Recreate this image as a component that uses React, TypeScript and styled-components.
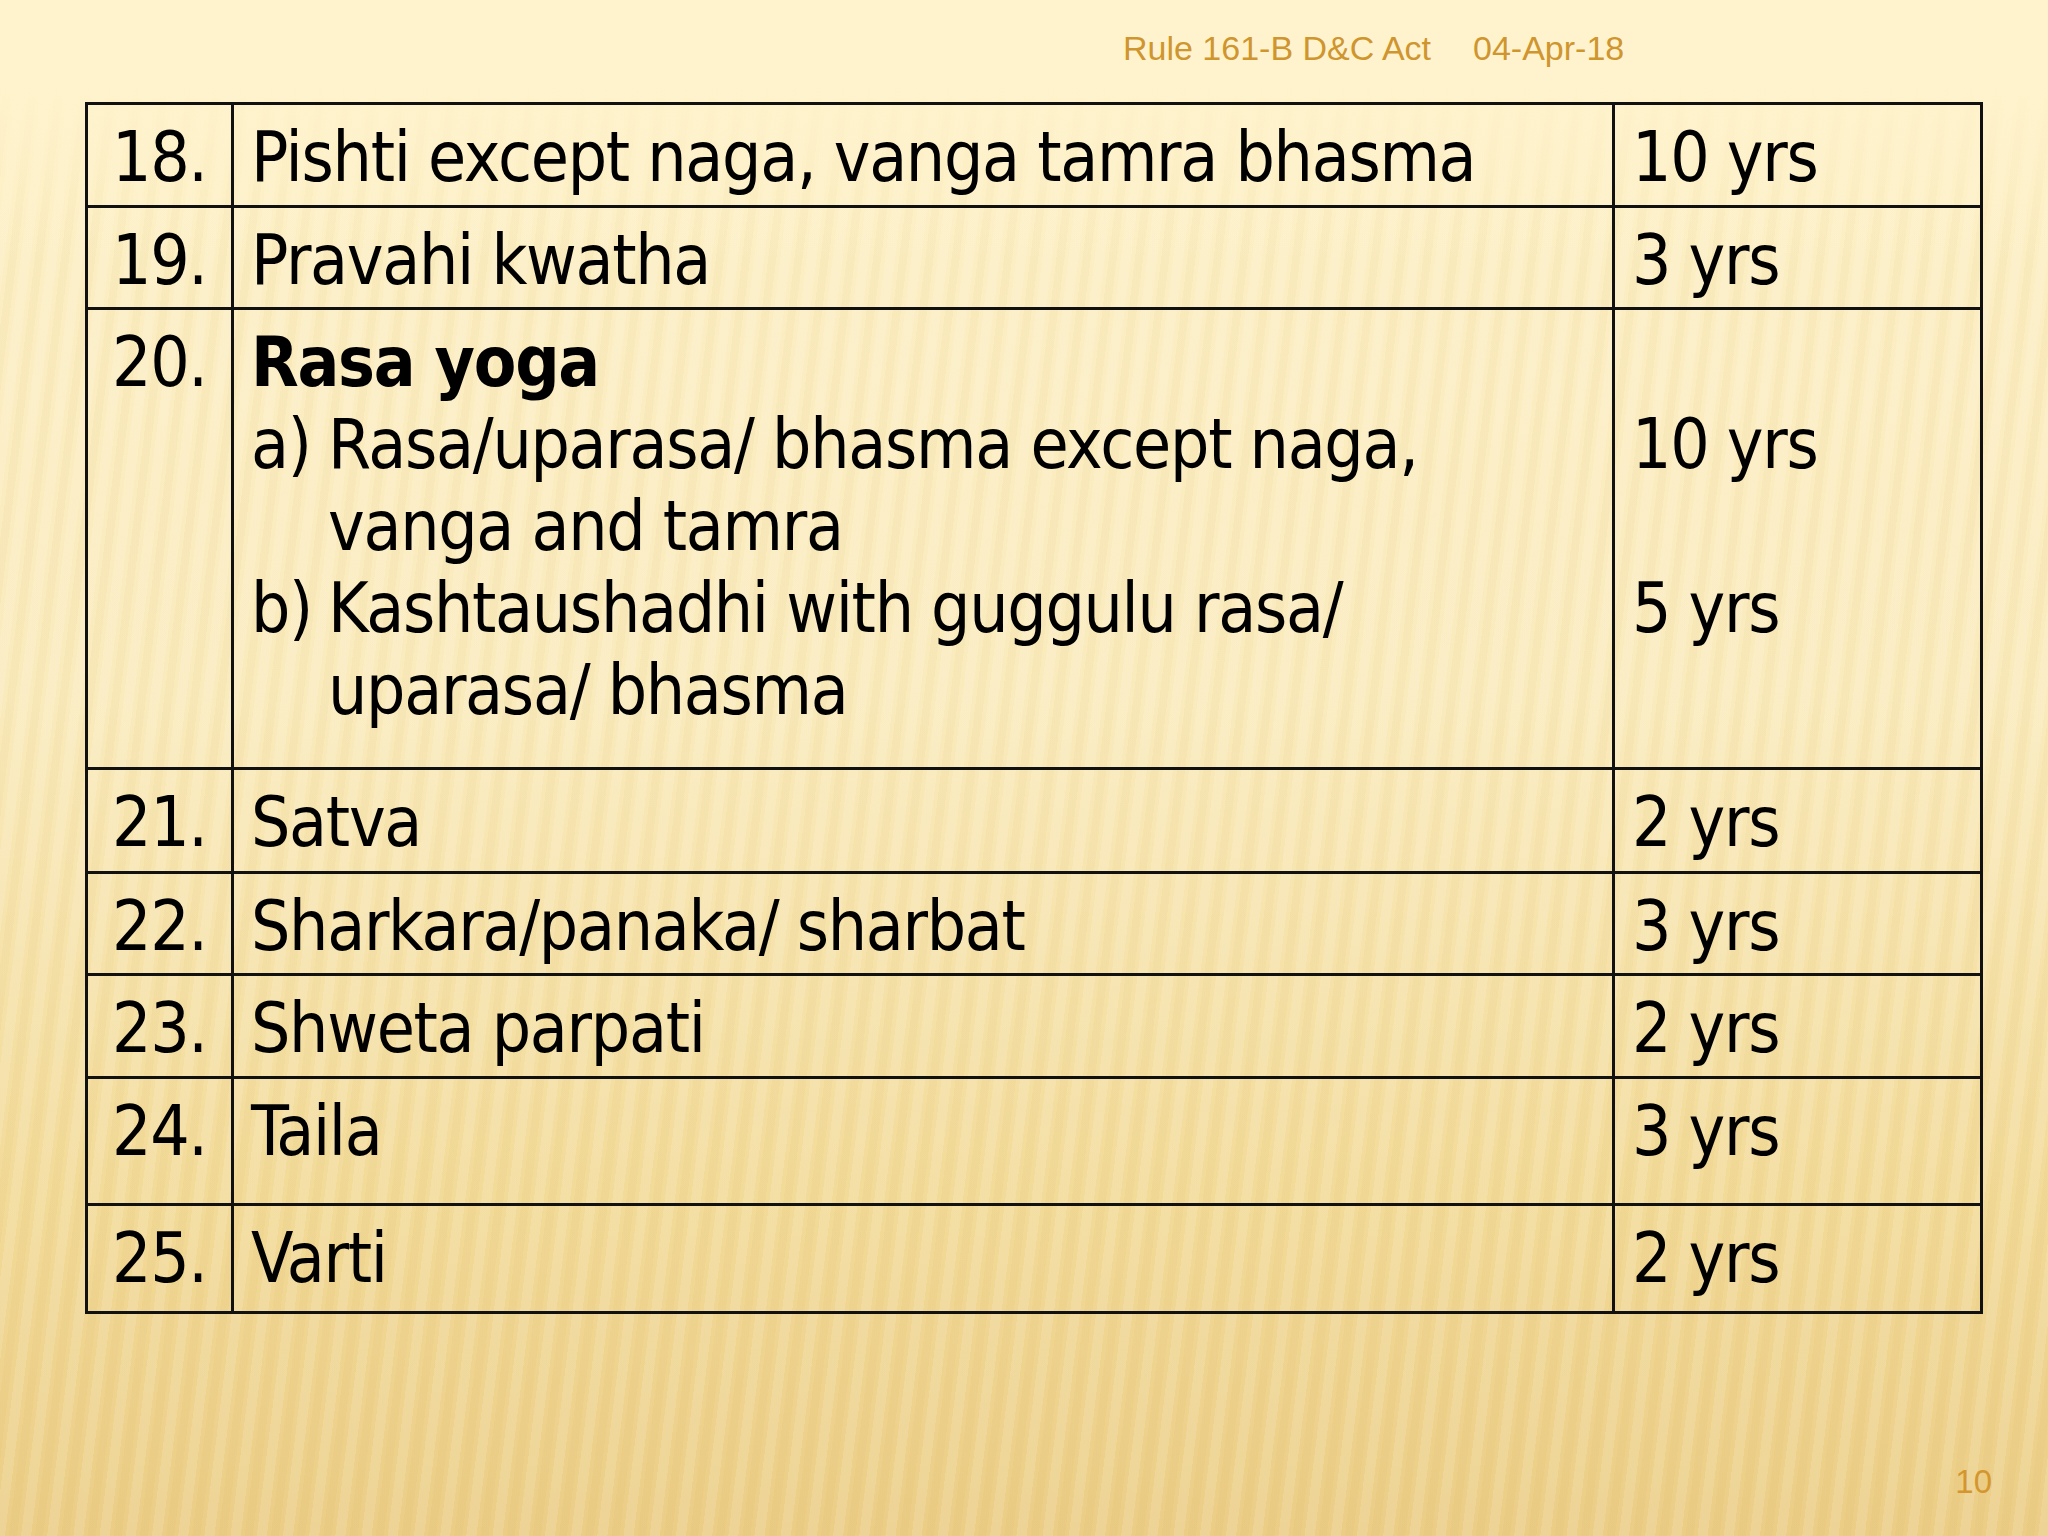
import styled, { createGlobalStyle } from "styled-components";

const GlobalStyle = createGlobalStyle`
  html, body {
    margin: 0;
    padding: 0;
  }
  body {
    width: 2048px;
    height: 1536px;
    overflow: hidden;
  }
`;

const Slide = styled.div`
  width: 2048px;
  height: 1536px;
  display: flex;
  flex-direction: column;
  box-sizing: border-box;
  background:
    linear-gradient(to bottom, #fff3cd 0, #fff3cd 80px, rgba(255, 243, 205, 0) 260px),
    repeating-linear-gradient(
      97deg,
      rgba(255, 255, 255, 0.13) 0 10px,
      rgba(255, 255, 255, 0) 10px 14px,
      rgba(196, 152, 66, 0.05) 14px 22px,
      rgba(255, 255, 255, 0) 22px 26px
    ),
    linear-gradient(to bottom, #fdf0c6 0%, #faebbd 45%, #f2da98 78%, #ebcd86 100%);
`;

const Header = styled.div`
  height: 102px;
  box-sizing: border-box;
  padding: 29px 0 0 1123px;
  display: flex;
  gap: 42px;
  font-family: "Liberation Sans", Arial, sans-serif;
  font-size: 34px;
  line-height: 38px;
  color: #cf952f;
`;

const Grid = styled.table`
  margin-left: 85px;
  width: 1895px;
  border-collapse: collapse;
  table-layout: fixed;
  font-family: "DejaVu Sans Condensed", "DejaVu Sans", sans-serif;
  font-stretch: semi-condensed;
  font-size: 69px;
  line-height: 82px;
  letter-spacing: -1.3px;
  color: #000;
`;

const Row = styled.tr<{ $h: number }>`
  height: ${({ $h }) => $h}px;
`;

const Cell = styled.td`
  border: 3px solid #111;
  padding: 11px 0 0 17px;
  vertical-align: top;
  white-space: nowrap;
  overflow: hidden;
`;

const NumCell = styled(Cell)`
  padding-left: 24px;
`;

const Heading = styled.div`
  font-weight: bold;
`;

const SubItem = styled.div`
  display: grid;
  grid-template-columns: 77px 1fr;
`;

const Blank = styled.div`
  height: 82px;
`;

const Footer = styled.div`
  margin-top: auto;
  display: flex;
  justify-content: flex-end;
  padding: 0 56px 36px 0;
  font-family: "Liberation Sans", Arial, sans-serif;
  font-size: 33px;
  line-height: 36px;
  color: #d4972f;
`;

type Item = { n: string; name: string; dur: string; h: number };

const rowsTop: Item[] = [
  { n: "18.", name: "Pishti except naga, vanga tamra bhasma", dur: "10 yrs", h: 103 },
  { n: "19.", name: "Pravahi kwatha", dur: "3 yrs", h: 102 },
];

const rowsBottom: Item[] = [
  { n: "21.", name: "Satva", dur: "2 yrs", h: 104 },
  { n: "22.", name: "Sharkara/panaka/ sharbat", dur: "3 yrs", h: 102 },
  { n: "23.", name: "Shweta parpati", dur: "2 yrs", h: 103 },
  { n: "24.", name: "Taila", dur: "3 yrs", h: 127 },
  { n: "25.", name: "Varti", dur: "2 yrs", h: 108 },
];

function SimpleRow({ item }: { item: Item }) {
  return (
    <Row $h={item.h}>
      <NumCell>{item.n}</NumCell>
      <Cell>{item.name}</Cell>
      <Cell>{item.dur}</Cell>
    </Row>
  );
}

export default function App() {
  return (
    <>
      <GlobalStyle />
      <Slide>
        <Header>
          <span>Rule 161-B D&amp;C Act</span>
          <span>04-Apr-18</span>
        </Header>
        <Grid>
          <colgroup>
            <col style={{ width: 146 }} />
            <col style={{ width: 1381 }} />
            <col style={{ width: 368 }} />
          </colgroup>
          <tbody>
            {rowsTop.map((r) => (
              <SimpleRow key={r.n} item={r} />
            ))}
            <Row $h={460}>
              <NumCell>20.</NumCell>
              <Cell>
                <Heading>Rasa yoga</Heading>
                <SubItem>
                  <span>a)</span>
                  <span>
                    Rasa/uparasa/ bhasma except naga,
                    <br />
                    vanga and tamra
                  </span>
                </SubItem>
                <SubItem>
                  <span>b)</span>
                  <span>
                    Kashtaushadhi with guggulu rasa/
                    <br />
                    uparasa/ bhasma
                  </span>
                </SubItem>
              </Cell>
              <Cell>
                <Blank />
                <div>10 yrs</div>
                <Blank />
                <div>5 yrs</div>
              </Cell>
            </Row>
            {rowsBottom.map((r) => (
              <SimpleRow key={r.n} item={r} />
            ))}
          </tbody>
        </Grid>
        <Footer>10</Footer>
      </Slide>
    </>
  );
}
